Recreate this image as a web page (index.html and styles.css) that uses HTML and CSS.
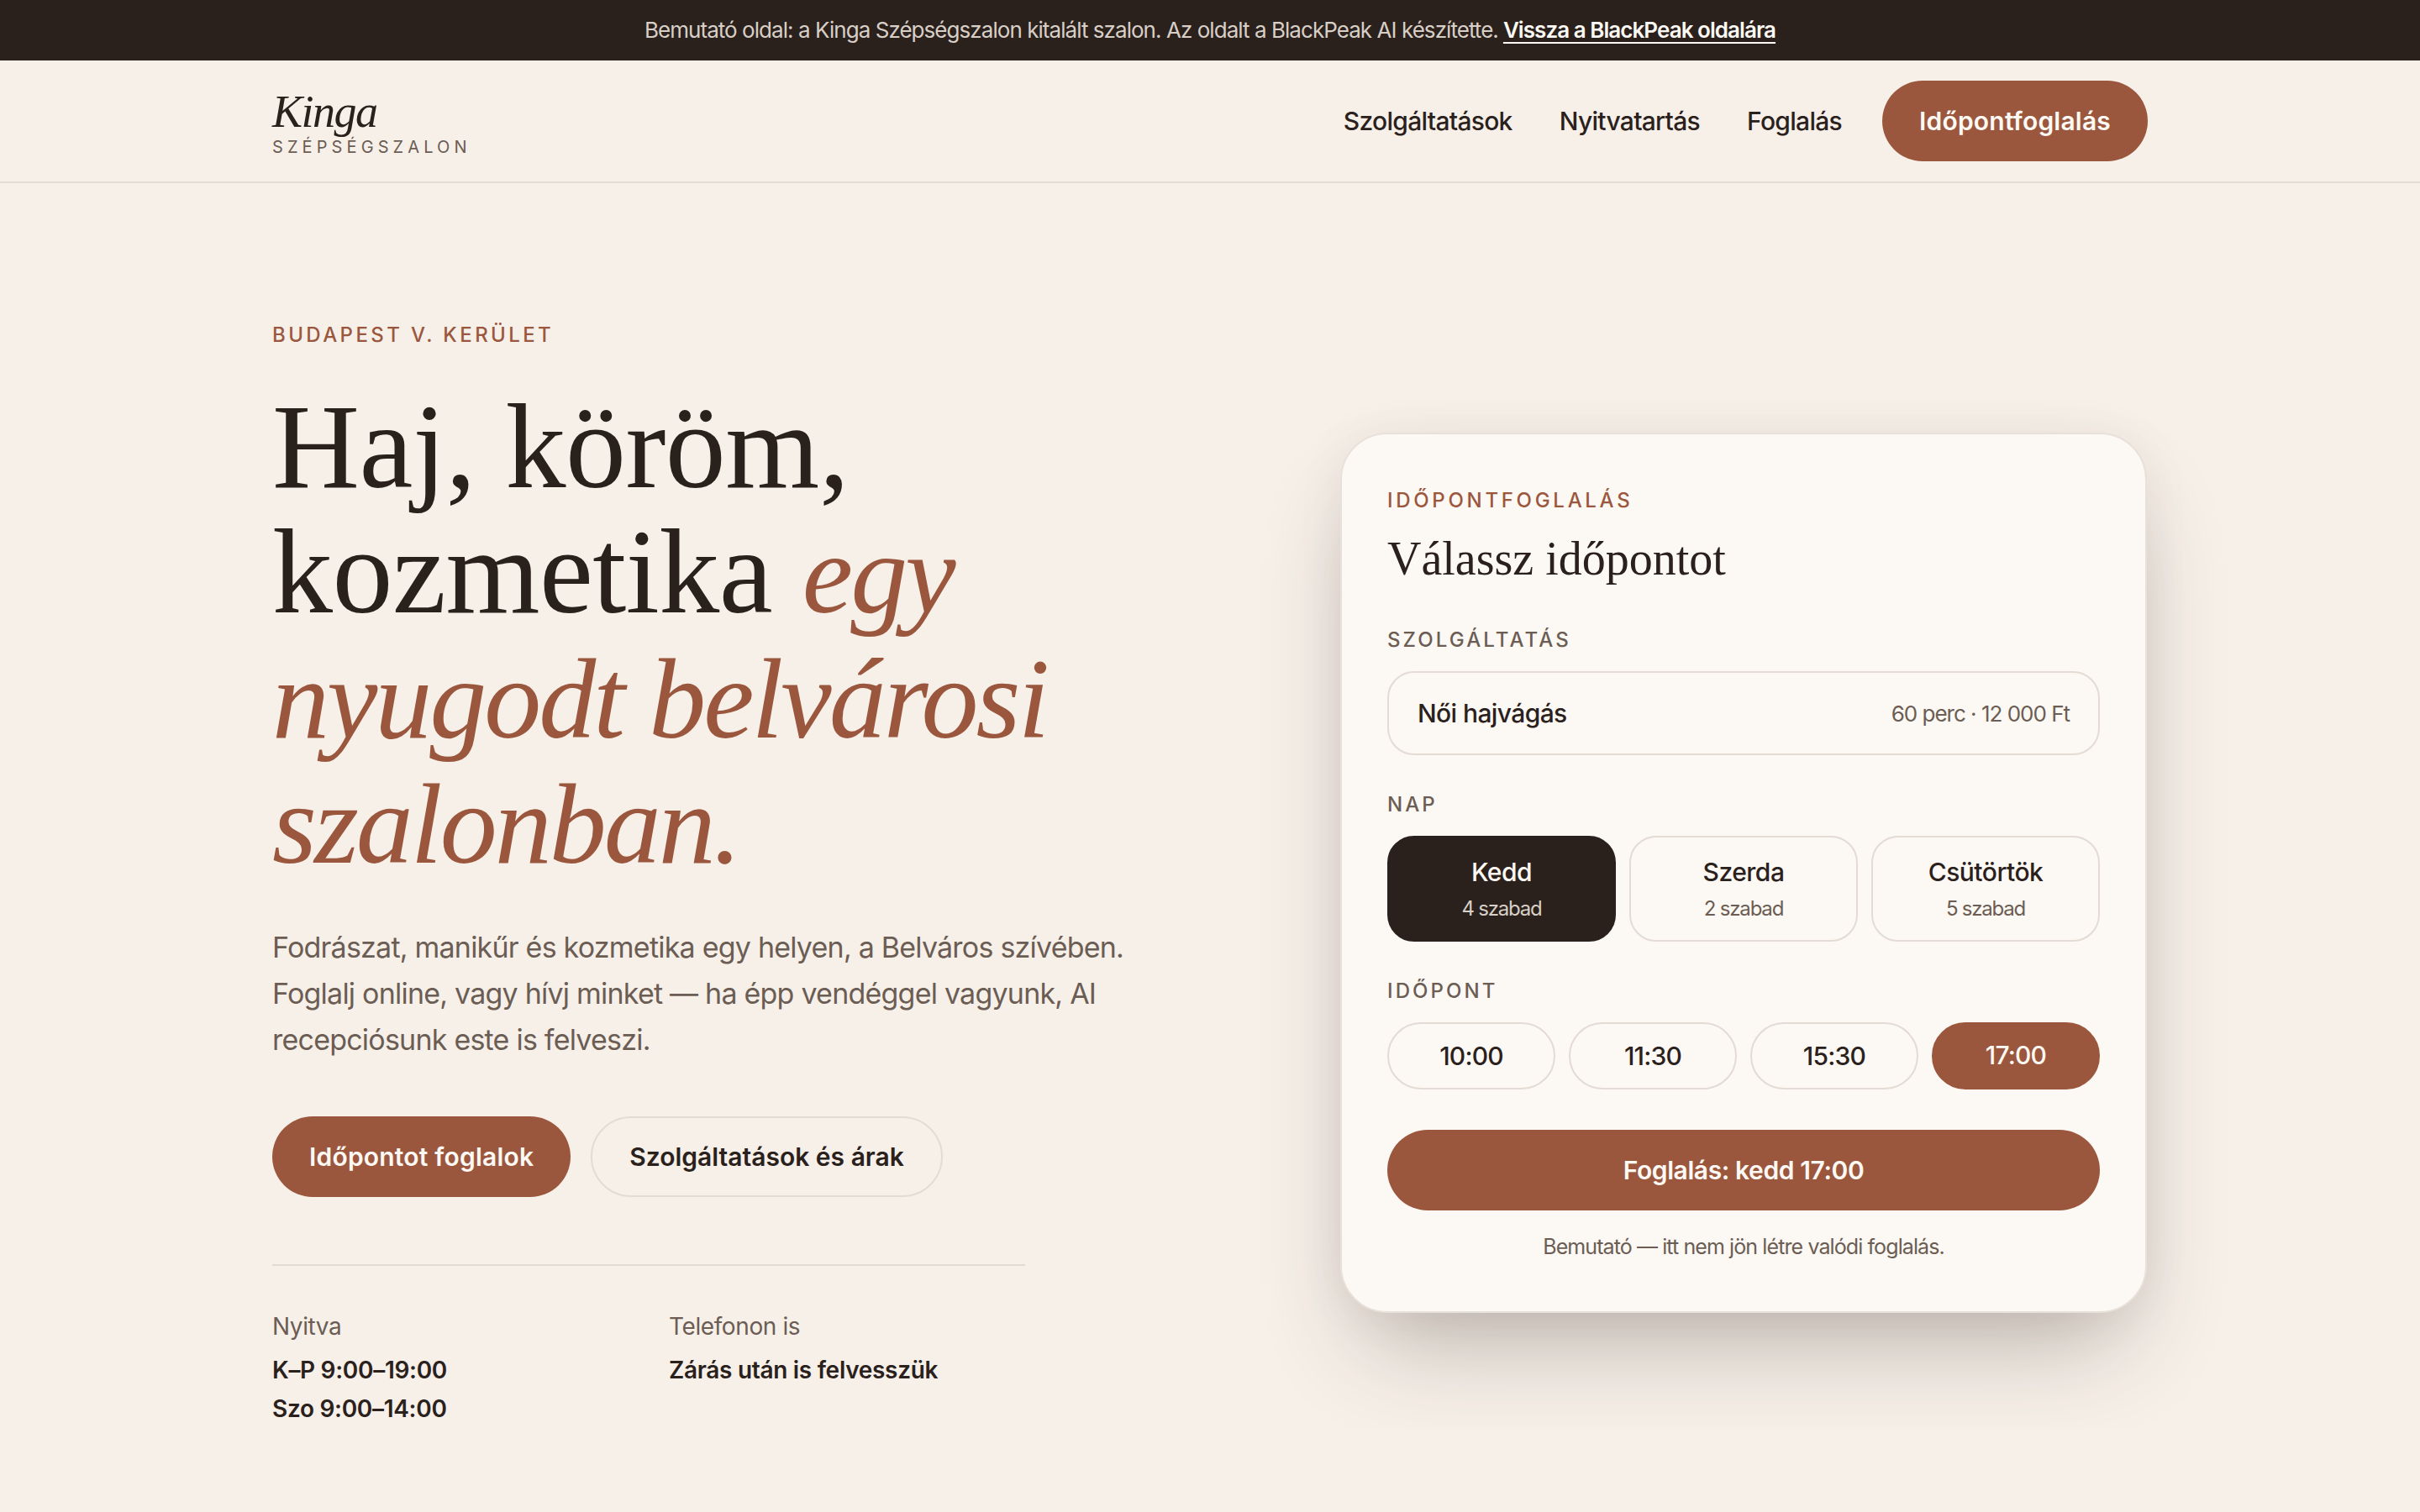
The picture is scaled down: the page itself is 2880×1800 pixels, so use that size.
FILE: index.html
```html
<!DOCTYPE html>
<html lang="hu">
<head>
    <meta charset="UTF-8">
    <meta name="viewport" content="width=device-width, initial-scale=1.0">
    <title>Kinga Szépségszalon</title>
    <link rel="stylesheet" href="styles.css">
</head>
<body>
    <div class="topbar">
        Bemutató oldal: a Kinga Szépségszalon kitalált szalon. Az oldalt a BlackPeak AI készítette.
        <a href="#">Vissza a BlackPeak oldalára</a>
    </div>

    <header class="site-header">
        <div class="container header-inner">
            <a class="logo" href="#">
                <span class="logo-name">Kinga</span>
                <span class="logo-sub">Szépségszalon</span>
            </a>
            <nav class="nav">
                <div class="nav-links">
                    <a href="#">Szolgáltatások</a>
                    <a href="#">Nyitvatartás</a>
                    <a href="#">Foglalás</a>
                </div>
                <a class="btn btn-primary" href="#">Időpontfoglalás</a>
            </nav>
        </div>
    </header>

    <main class="container hero">
        <section class="hero-text">
            <p class="eyebrow">Budapest V. kerület</p>
            <h1>Haj, köröm, kozmetika <em>egy nyugodt belvárosi szalonban.</em></h1>
            <p class="lead">Fodrászat, manikűr és kozmetika egy helyen, a Belváros szívében. Foglalj online, vagy hívj minket — ha épp vendéggel vagyunk, AI recepciósunk este is felveszi.</p>
            <div class="hero-actions">
                <a class="btn btn-primary" href="#">Időpontot foglalok</a>
                <a class="btn btn-ghost" href="#">Szolgáltatások és árak</a>
            </div>
            <div class="facts">
                <div>
                    <p class="fact-label">Nyitva</p>
                    <p class="fact-value">K–P 9:00–19:00</p>
                    <p class="fact-value">Szo 9:00–14:00</p>
                </div>
                <div>
                    <p class="fact-label">Telefonon is</p>
                    <p class="fact-value">Zárás után is felvesszük</p>
                </div>
            </div>
        </section>

        <aside class="booking-card">
            <p class="card-eyebrow">Időpontfoglalás</p>
            <h2>Válassz időpontot</h2>

            <p class="field-label">Szolgáltatás</p>
            <div class="service-select">
                <span class="service-name">Női hajvágás</span>
                <span class="service-meta">60 perc · 12 000 Ft</span>
            </div>

            <p class="field-label">Nap</p>
            <div class="day-grid">
                <button class="day active"><strong>Kedd</strong><small>4 szabad</small></button>
                <button class="day"><strong>Szerda</strong><small>2 szabad</small></button>
                <button class="day"><strong>Csütörtök</strong><small>5 szabad</small></button>
            </div>

            <p class="field-label">Időpont</p>
            <div class="time-grid">
                <button class="time">10:00</button>
                <button class="time">11:30</button>
                <button class="time">15:30</button>
                <button class="time active">17:00</button>
            </div>

            <button class="btn btn-primary btn-block">Foglalás: kedd 17:00</button>
            <p class="card-note">Bemutató — itt nem jön létre valódi foglalás.</p>
        </aside>
    </main>
</body>
</html>
```

FILE: styles.css
```css
* {
  box-sizing: border-box;
}

body {
  margin: 0;
  background-color: #f7f0e9;
  color: #2b211c;
  font-family: 'Inter', 'Liberation Sans', sans-serif;
}

a {
  color: inherit;
  text-decoration: none;
}

p {
  margin: 0;
}

button {
  font-family: inherit;
  cursor: pointer;
}

.container {
  width: 2232px;
  margin: 0 auto;
}

.topbar {
  height: 72px;
  display: flex;
  justify-content: center;
  align-items: center;
  gap: 6px;
  padding-bottom: 2px;
  background-color: #2b211c;
  color: #d8cfc7;
  font-size: 26px;
  letter-spacing: -0.95px;
}

.topbar a {
  color: #fcf8f3;
  font-weight: 600;
  text-decoration: underline;
  text-underline-offset: 5px;
}

.site-header {
  height: 146px;
  border-bottom: 2px solid #e3dbd4;
}

.header-inner {
  height: 144px;
  display: flex;
  justify-content: space-between;
  align-items: center;
}

.logo {
  display: flex;
  flex-direction: column;
  padding-top: 4px;
}

.logo-name {
  font-family: 'Liberation Serif', serif;
  font-style: italic;
  font-size: 54px;
  line-height: 56px;
  letter-spacing: -1.5px;
}

.logo-sub {
  margin-top: 2px;
  font-size: 20px;
  line-height: 24px;
  letter-spacing: 5.1px;
  text-transform: uppercase;
  color: #6b5d54;
}

.nav {
  display: flex;
  align-items: center;
  gap: 48px;
}

.nav-links {
  display: flex;
  gap: 56px;
  font-size: 30px;
  font-weight: 500;
  letter-spacing: -0.7px;
}

.btn {
  display: inline-flex;
  justify-content: center;
  align-items: center;
  height: 96px;
  padding: 0 44px;
  border-radius: 48px;
  border: none;
  font-size: 30px;
  font-weight: 600;
  letter-spacing: 0.2px;
}

.btn-primary {
  background-color: #9b573d;
  color: #fcf8f3;
}

.btn-ghost {
  border: 2px solid #e3dbd4;
  letter-spacing: 0;
}

.btn-block {
  width: 100%;
  margin-top: 48px;
  letter-spacing: -0.4px;
}

.hero {
  display: grid;
  grid-template-columns: 1fr 961px;
  align-items: center;
  padding-top: 166px;
}

.eyebrow {
  font-size: 24px;
  line-height: 30px;
  font-weight: 500;
  letter-spacing: 3.4px;
  text-transform: uppercase;
  color: #9b573d;
}

h1 {
  width: 1000px;
  margin: 43px 0 0;
  font-family: 'Liberation Serif', serif;
  font-size: 144px;
  font-weight: 400;
  line-height: 149px;
  letter-spacing: -0.5px;
}

h1 em {
  font-size: 136px;
  line-height: 1;
  letter-spacing: -3px;
  color: #9b573d;
}

.lead {
  width: 1040px;
  margin-top: 47px;
  font-size: 34px;
  line-height: 55px;
  letter-spacing: -0.78px;
  color: #6b5d54;
}

.hero-actions {
  display: flex;
  gap: 24px;
  margin-top: 64px;
}

.facts {
  width: 896px;
  display: grid;
  grid-template-columns: 1fr 1fr;
  gap: 48px;
  margin-top: 80px;
  padding-top: 50px;
  border-top: 2px solid #e3dbd4;
}

.fact-label {
  margin-bottom: 6px;
  font-size: 28px;
  line-height: 45px;
  letter-spacing: -0.4px;
  color: #6b5d54;
}

.fact-value {
  font-size: 28px;
  line-height: 46px;
  font-weight: 600;
  letter-spacing: -0.3px;
}

.booking-card {
  width: 960px;
  margin-bottom: 6px;
  padding: 64px 54px 60px;
  background-color: #fcf8f3;
  border: 2px solid #e8e1da;
  border-radius: 56px;
  box-shadow: 0 60px 120px -30px rgba(43, 33, 28, 0.3), 0 4px 60px rgba(43, 33, 28, 0.06);
}

.card-eyebrow {
  font-size: 24px;
  line-height: 30px;
  font-weight: 500;
  letter-spacing: 3.7px;
  text-transform: uppercase;
  color: #9b573d;
}

h2 {
  margin: 20px 0 0;
  padding-bottom: 4px;
  font-family: 'Liberation Serif', serif;
  font-size: 56px;
  font-weight: 400;
  line-height: 68px;
  letter-spacing: 0;
}

.field-label {
  margin: 44px 0 22px;
  font-size: 24px;
  line-height: 30px;
  font-weight: 500;
  letter-spacing: 3.1px;
  text-transform: uppercase;
  color: #6b5d54;
}

.service-select {
  height: 100px;
  display: flex;
  justify-content: space-between;
  align-items: center;
  padding: 0 34px;
  border: 2px solid #e3dbd4;
  border-radius: 32px;
}

.service-name {
  font-size: 30px;
  font-weight: 500;
  letter-spacing: -0.6px;
}

.service-meta {
  font-size: 26px;
  letter-spacing: -1px;
  color: #6b5d54;
}

.day-grid {
  display: grid;
  grid-template-columns: repeat(3, 1fr);
  gap: 16px;
}

.day {
  height: 126px;
  display: flex;
  flex-direction: column;
  align-items: center;
  justify-content: center;
  gap: 8px;
  background: none;
  border: 2px solid #e3dbd4;
  border-radius: 32px;
  color: #2b211c;
}

.day strong {
  font-size: 30px;
  line-height: 40px;
  font-weight: 500;
  letter-spacing: -0.5px;
}

.day small {
  font-size: 24px;
  line-height: 32px;
  letter-spacing: -1.2px;
  color: #6b5d54;
}

.day.active {
  background-color: #2b211c;
  border-color: #2b211c;
  color: #fcf8f3;
}

.day.active small {
  color: #d8cfc7;
}

.time-grid {
  display: grid;
  grid-template-columns: repeat(4, 1fr);
  gap: 16px;
}

.time {
  height: 80px;
  background: none;
  border: 2px solid #e3dbd4;
  border-radius: 40px;
  font-size: 30px;
  font-weight: 500;
  letter-spacing: -0.8px;
  color: #2b211c;
}

.time.active {
  padding-bottom: 4px;
  background-color: #9b573d;
  border-color: #9b573d;
  color: #fcf8f3;
}

.card-note {
  margin-top: 26px;
  font-size: 25px;
  line-height: 34px;
  letter-spacing: -0.9px;
  text-align: center;
  color: #6b5d54;
}
```
